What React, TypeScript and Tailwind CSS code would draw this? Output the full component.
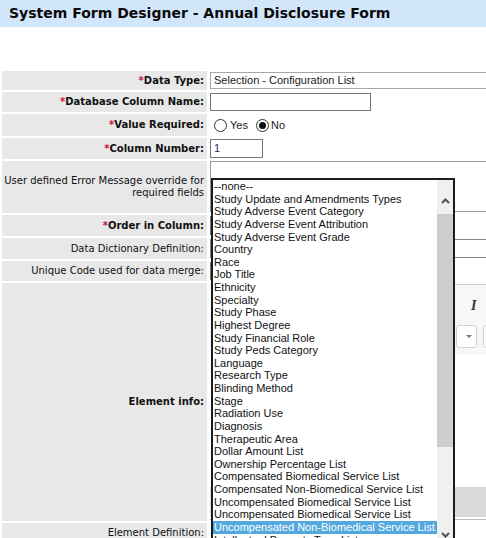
import type { ReactNode } from 'react'

const verdana = "font-['DejaVu_Sans',Verdana,sans-serif]"
const arial = "font-['Liberation_Sans',Arial,sans-serif]"

const configLists = [
  '--none--',
  'Study Update and Amendments Types',
  'Study Adverse Event Category',
  'Study Adverse Event Attribution',
  'Study Adverse Event Grade',
  'Country',
  'Race',
  'Job Title',
  'Ethnicity',
  'Specialty',
  'Study Phase',
  'Highest Degree',
  'Study Financial Role',
  'Study Peds Category',
  'Language',
  'Research Type',
  'Blinding Method',
  'Stage',
  'Radiation Use',
  'Diagnosis',
  'Therapeutic Area',
  'Dollar Amount List',
  'Ownership Percentage List',
  'Compensated Biomedical Service List',
  'Compensated Non-Biomedical Service List',
  'Uncompensated Biomedical Service List',
  'Uncompensated Biomedical Service List',
  'Uncompensated Non-Biomedical Service List',
  'Intellectual Property Type List',
]
const selectedIndex = 27

function Row({ label, required, bold, height, top, children }: {
  label: ReactNode
  required?: boolean
  bold?: boolean
  height: string
  top?: string
  children?: ReactNode
}) {
  return (
    <div className={`flex gap-[3px] ${height}`}>
      <div className={`w-[205px] shrink-0 bg-[#e8e8e8] flex items-center justify-end pr-[3px] text-right leading-[12px] ${verdana} text-[10px] text-[#111] ${bold ? 'font-bold' : ''}`}>
        <span>
          {required && <span className="text-[#c4123c]">*</span>}
          {label}
        </span>
      </div>
      <div className={`flex-1 flex ${top ?? 'items-center'} ${arial} text-[11px] text-[#1a1a1a]`}>
        {children}
      </div>
    </div>
  )
}

function Radio({ checked }: { checked?: boolean }) {
  return (
    <span className="w-[13px] h-[13px] rounded-full border border-[#333] bg-white flex items-center justify-center">
      {checked && <span className="w-[7px] h-[7px] rounded-full bg-[#111]" />}
    </span>
  )
}

function Chevron({ down }: { down?: boolean }) {
  return (
    <svg width="9" height="6" viewBox="0 0 9 6">
      <path d={down ? 'M1 1 L4.5 4.5 L8 1' : 'M1 5 L4.5 1.5 L8 5'} fill="none" stroke="#505050" strokeWidth="2" />
    </svg>
  )
}

// opened popup of the "Configuration List" select
function ListPopup() {
  return (
    <div className="absolute left-[211px] top-[178px] w-[244px] h-[367px] border-2 border-[#1c1c1c] bg-white flex">
      <div className={`flex-1 flex flex-col ${arial} text-[11px] text-[#111]`}>
        {configLists.map((name, i) => (
          <div
            key={i}
            className={`h-[12.63px] shrink-0 flex items-center pl-[1px] whitespace-nowrap ${i === selectedIndex ? 'bg-[#53a9de] text-white' : ''}`}
          >
            {name}
          </div>
        ))}
      </div>
      <div className="w-[16px] bg-[#f0f0f0] flex flex-col">
        <div className="h-[34px] shrink-0 flex justify-center pt-[18px]">
          <Chevron />
        </div>
        <div className="flex-1">
          <div className="h-[233px] bg-[#cdcdcd]" />
        </div>
        <div className="h-[17px] flex items-center justify-center shrink-0">
          <Chevron down />
        </div>
      </div>
    </div>
  )
}

export default function App() {
  return (
    <div className="relative w-[486px] h-[538px] overflow-hidden bg-white">
      <div className="h-[27px] bg-[#d2e6fb] flex items-center pl-[9px]">
        <h1 className={`${verdana} font-bold text-[14px] text-[#0a0a0a] whitespace-nowrap`}>
          System Form Designer - Annual Disclosure Form
        </h1>
      </div>

      <div className="mt-[44px] pl-[2px] flex flex-col gap-[2px] w-[700px]">
        <Row label="Data Type:" required bold height="h-[19px]">
          <div className="w-[490px] h-[17px] border border-[#a6a6a6] flex items-center pl-[3px]">
            Selection - Configuration List
          </div>
        </Row>
        <Row label="Database Column Name:" required bold height="h-[20px]">
          <div className="w-[161px] h-[18px] border border-[#767676]" />
        </Row>
        <Row label="Value Required:" required bold height="h-[22px]">
          <div className="flex items-center pl-[4px]">
            <Radio />
            <span className="ml-[3px]">Yes</span>
            <span className="ml-[8px]"><Radio checked /></span>
            <span className="ml-[2px]">No</span>
          </div>
        </Row>
        <Row label="Column Number:" required bold height="h-[21px]">
          <div className="w-[53px] h-[19px] border border-[#767676] flex items-center pl-[3px] text-[#1c2f6b]">1</div>
        </Row>
        <Row
          label={<>User defined Error Message override for<br />required fields</>}
          height="h-[52px]"
          top="items-start"
        >
          <div className="w-[490px] h-[51px] border border-[#999]" />
        </Row>
        <Row label="Order in Column:" required bold height="h-[21px]">
          <div className="w-[50px] h-[19px] border border-[#767676]" />
        </Row>
        <Row label="Data Dictionary Definition:" height="h-[21px]">
          <div className="w-[490px] h-[19px] border border-[#888]" />
        </Row>
        <Row label="Unique Code used for data merge:" height="h-[20px]">
          <div className="w-[160px] h-[18px] border border-[#767676]" />
        </Row>
        <Row label="Element info:" bold height="h-[238px]" top="items-start">
          <div className="w-[490px] mt-[1px] flex flex-col">
            <div className="h-[1px] bg-[#cfcfcf]" />
            <div className="h-[70px] bg-[#f7f7f7] flex flex-col">
              <div className="h-[40px] flex items-center pl-[261px]">
                <span className="font-['Liberation_Serif',serif] italic font-bold text-[14px] text-[#333]">I</span>
              </div>
              <div className="flex gap-[6px] pl-[246px]">
                <div className="w-[21px] h-[23px] rounded-[3px] border border-[#d0d0d0] bg-white flex items-center justify-center pl-[5px]">
                  <svg width="6" height="3" viewBox="0 0 6 3"><path d="M0 0 L6 0 L3 3 Z" fill="#777" /></svg>
                </div>
                <div className="w-[21px] h-[23px] rounded-[3px] border border-[#d0d0d0] bg-white" />
              </div>
            </div>
            <div className="h-[132px]" />
            <div className="h-[30px] bg-[#d9d9d9]" />
            <div className="h-[2px]" />
            <div className="h-[1px] bg-[#bbb]" />
          </div>
        </Row>
        <Row label="Element Definition:" height="h-[20px]" />
      </div>

      <ListPopup />
    </div>
  )
}
